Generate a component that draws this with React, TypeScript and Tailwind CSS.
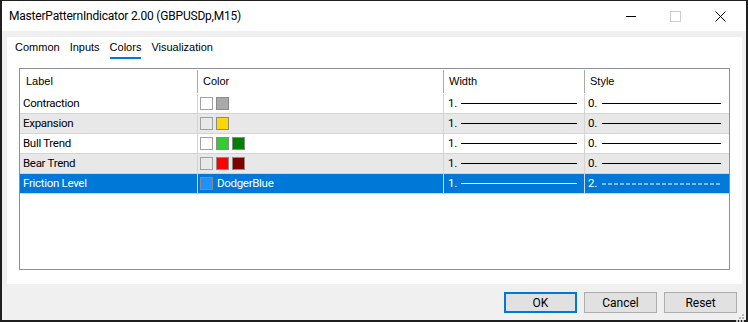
import React from 'react';

type Row = {
  label: string;
  swatches: (string | null)[];
  colorName?: string;
  width: string;
  style: string;
  dashed?: boolean;
};

const rows: Row[] = [
  { label: 'Contraction', swatches: [null, '#a9a9a9'], width: '1.', style: '0.' },
  { label: 'Expansion', swatches: [null, '#ffd700'], width: '1.', style: '0.' },
  { label: 'Bull Trend', swatches: [null, '#32cd32', '#008000'], width: '1.', style: '0.' },
  { label: 'Bear Trend', swatches: [null, '#ff0000', '#800000'], width: '1.', style: '0.' },
  { label: 'Friction Level', swatches: ['#1e90ff'], colorName: 'DodgerBlue', width: '1.', style: '2.', dashed: true },
];

const font = { fontFamily: '"Segoe UI", Roboto, "Noto Sans", sans-serif' };
const smallFont = { fontFamily: 'Tahoma, "Liberation Sans", sans-serif' };

export default function App() {
  return (
    <div className="w-[748px] h-[322px] bg-[#1f1f1f] pt-[1px] pl-[2px] pr-[2px] pb-[2px]" style={font}>
      <div className="flex flex-col h-full bg-[#f0f0f0] text-[#000]">
        {/* Title bar */}
        <div className="h-[30px] bg-white flex items-center shrink-0">
          <span className="pl-[7px] text-[12px] tracking-[-0.2px] text-black flex-1">MasterPatternIndicator 2.00 (GBPUSDp,M15)</span>
          <div className="flex items-center h-full">
            <div className="w-[45px] h-full flex items-center justify-center">
              <svg width="10" height="10" viewBox="0 0 10 10">
                <line x1="0" y1="5.5" x2="10" y2="5.5" stroke="#000" strokeWidth="1" />
              </svg>
            </div>
            <div className="w-[45px] h-full flex items-center justify-center">
              <svg width="11" height="11" viewBox="0 0 11 11">
                <rect x="0.5" y="0.5" width="10" height="10" fill="none" stroke="#cccccc" strokeWidth="1" />
              </svg>
            </div>
            <div className="w-[45px] h-full flex items-center justify-center mr-[3px]">
              <svg width="11" height="11" viewBox="0 0 11 11">
                <path d="M0.5 0.5 L10.5 10.5 M10.5 0.5 L0.5 10.5" stroke="#000" strokeWidth="1" />
              </svg>
            </div>
          </div>
        </div>

        {/* Body */}
        <div className="flex-1 flex flex-col">
          <div className="mt-[6px] ml-[5px] mr-[4px] h-[247px] bg-white flex flex-col">
            {/* Tabs */}
            <div className="flex gap-[10px] pl-[8px] pt-[3px] text-[11px] h-[21px]" style={smallFont}>
              <span className="leading-[15px]">Common</span>
              <span className="leading-[15px]">Inputs</span>
              <span className="leading-[15px] border-b-2 border-[#0078d7] h-[19px]">Colors</span>
              <span className="leading-[15px]">Visualization</span>
            </div>

            {/* Table */}
            <div className="mt-[10px] ml-[12px] w-[711px] h-[202px] border border-[#8e8f9a] bg-white">
              <div className="grid grid-cols-[178px_246px_141px_144px] h-[25px]" style={smallFont}>
                <div className="flex items-center pl-[6px] text-[11px] border-r border-[#a9a9a9] my-[1px]">Label</div>
                <div className="flex items-center pl-[5px] text-[11px] border-r border-[#a9a9a9] my-[1px]">Color</div>
                <div className="flex items-center pl-[5px] text-[11px] border-r border-[#a9a9a9] my-[1px]">Width</div>
                <div className="flex items-center pl-[5px] text-[11px]">Style</div>
              </div>
              {rows.map((r, i) => {
                const selected = !!r.dashed;
                const bg = selected ? 'bg-[#0078d7] text-white' : i % 2 === 1 ? 'bg-[#e8e8e8] text-black' : 'bg-white text-black';
                const lineColor = selected ? '#ffffff' : '#000000';
                return (
                  <div key={i} className={`grid grid-cols-[178px_246px_141px_144px] h-[20px] border-b border-[#d4d4d4] text-[11.5px] tracking-[-0.3px] ${bg}`}>
                    <div className="flex items-center pl-[3px] border-r border-[#d4d4d4]">{r.label}</div>
                    <div className="flex items-center pl-[2px] gap-[3px] border-r border-[#d4d4d4]">
                      {r.swatches.map((c, j) =>
                        c ? (
                          <span key={j} className="w-[13px] h-[13px] border border-[#8a8a8a]" style={{ backgroundColor: c }} />
                        ) : (
                          <span key={j} className="w-[13px] h-[13px] border border-[#a0a0a0]" />
                        )
                      )}
                      {r.colorName && <span className="ml-[1px]">{r.colorName}</span>}
                    </div>
                    <div className="flex items-center pl-[4px] pr-[7px] border-r border-[#d4d4d4]">
                      <span className="w-[13px]">{r.width}</span>
                      <span className="flex-1 h-[1px]" style={{ backgroundColor: lineColor }} />
                    </div>
                    <div className="flex items-center pl-[3px] pr-[8px]">
                      <span className="w-[14px]">{r.style}</span>
                      {r.dashed ? (
                        <svg className="flex-1" height="2" preserveAspectRatio="none">
                          <line x1="0" y1="1" x2="118" y2="1" stroke={lineColor} strokeWidth="1" strokeDasharray="4 2" />
                        </svg>
                      ) : (
                        <span className="flex-1 h-[1px]" style={{ backgroundColor: lineColor }} />
                      )}
                    </div>
                  </div>
                );
              })}
            </div>
          </div>

          {/* Buttons */}
          <div className="flex justify-end gap-[7px] mt-[8px] mr-[9px] text-[12px]">
            <button className="w-[73px] h-[21px] bg-[#e1e1e1] border-2 border-[#0078d7] flex items-center justify-center">OK</button>
            <button className="w-[73px] h-[21px] bg-[#e1e1e1] border border-[#adadad] flex items-center justify-center">Cancel</button>
            <button className="w-[73px] h-[21px] bg-[#e1e1e1] border border-[#adadad] flex items-center justify-center">Reset</button>
          </div>
          <div className="flex justify-end mt-auto">
            <svg width="12" height="12" viewBox="0 0 12 12" className="mb-[1px] mr-[1px]">
              <rect x="9" y="1" width="2" height="2" fill="#b8b8b8" />
              <rect x="6" y="4" width="2" height="2" fill="#b8b8b8" />
              <rect x="9" y="4" width="2" height="2" fill="#b8b8b8" />
              <rect x="3" y="7" width="2" height="2" fill="#b8b8b8" />
              <rect x="6" y="7" width="2" height="2" fill="#b8b8b8" />
              <rect x="9" y="7" width="2" height="2" fill="#b8b8b8" />
            </svg>
          </div>
        </div>
      </div>
    </div>
  );
}
